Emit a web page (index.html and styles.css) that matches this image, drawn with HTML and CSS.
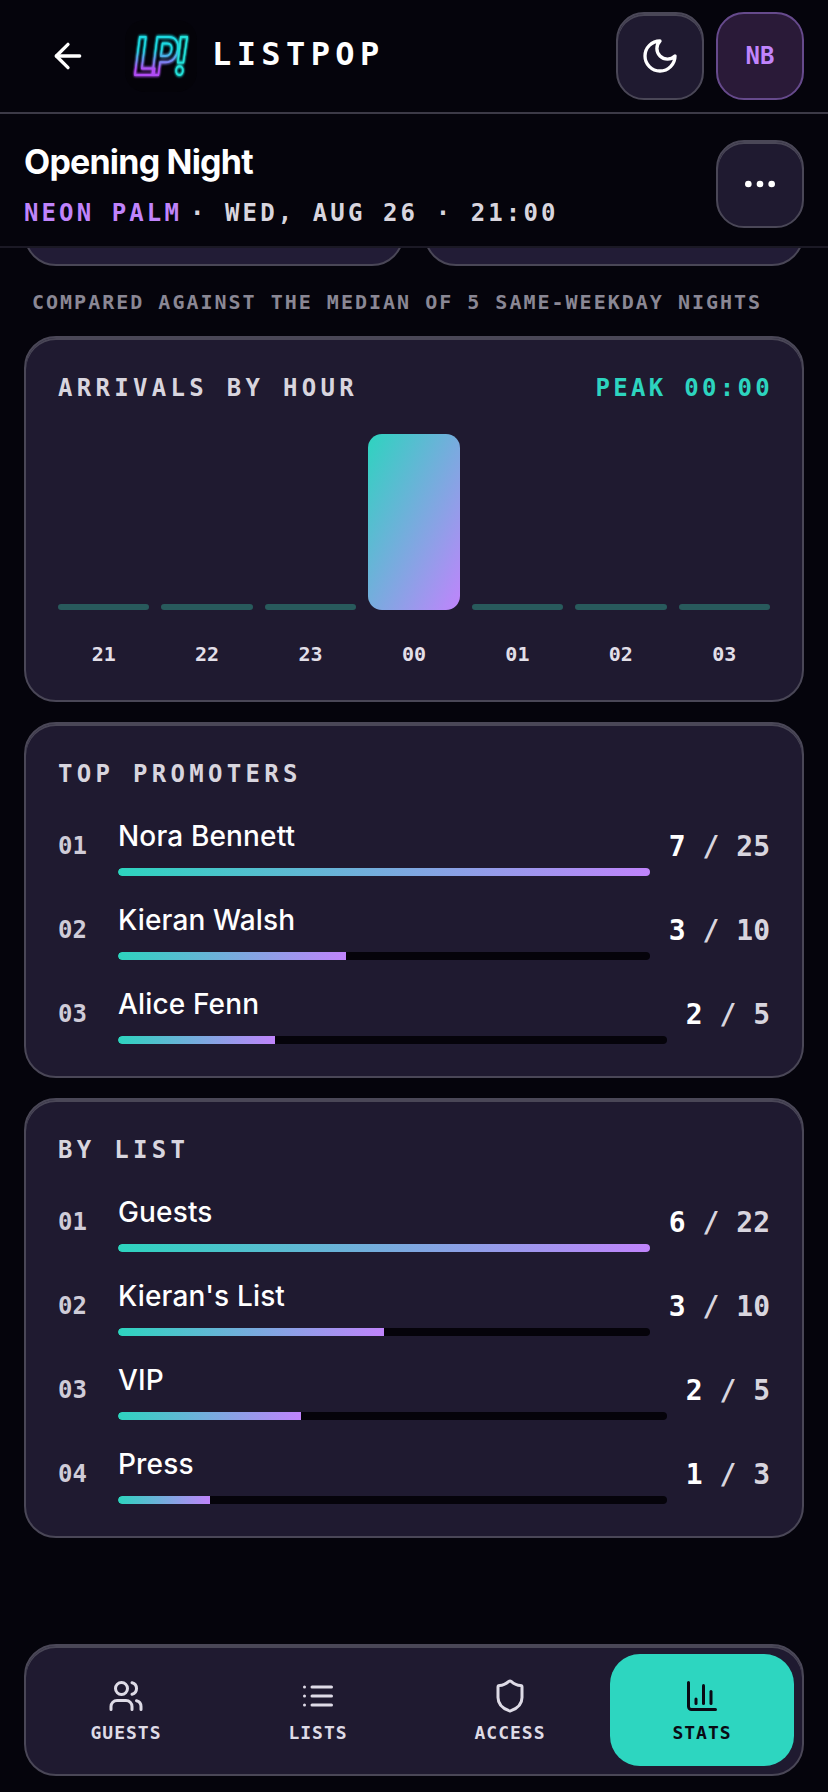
FILE: index.html
```html
<!DOCTYPE html>
<html lang="en">
<head>
    <meta charset="UTF-8">
    <meta name="viewport" content="width=device-width, initial-scale=1.0">
    <title>Listpop - Stats</title>
    <link rel="stylesheet" href="styles.css">
</head>
<body>
    <header class="topbar">
        <button class="back-btn" aria-label="Back">
            <svg class="icon" viewBox="0 0 24 24"><path d="m12 19-7-7 7-7"/><path d="M19 12H5"/></svg>
        </button>
        <div class="logo">
            <svg viewBox="0 0 72 72" width="72" height="72">
                <defs>
                    <linearGradient id="neon" x1="0" y1="0" x2="0" y2="1">
                        <stop offset="0.42" stop-color="#1fd8e0"/>
                        <stop offset="0.72" stop-color="#b04cf5"/>
                    </linearGradient>
                    <filter id="glow" x="-30%" y="-30%" width="160%" height="160%">
                        <feGaussianBlur stdDeviation="1.5" result="b"/>
                        <feMerge><feMergeNode in="b"/><feMergeNode in="b"/><feMergeNode in="SourceGraphic"/></feMerge>
                    </filter>
                </defs>
                <text class="logo-text" transform="scale(0.82 1.05)" x="11" y="52" fill="none" stroke="url(#neon)" filter="url(#glow)">LP<tspan stroke="#22e0d8" dx="2">!</tspan></text>
            </svg>
        </div>
        <div class="brand">LISTPOP</div>
        <button class="square-btn">
            <svg class="icon" viewBox="0 0 24 24"><path d="M12 3a6 6 0 0 0 9 9 9 9 0 1 1-9-9Z"/></svg>
        </button>
        <button class="square-btn avatar">NB</button>
    </header>

    <section class="event-bar">
        <div class="event-info">
            <h1>Opening Night</h1>
            <p class="event-meta"><span class="venue">NEON PALM</span><span class="event-when">· WED, AUG 26 · 21:00</span></p>
        </div>
        <button class="square-btn">
            <svg class="icon" viewBox="0 0 24 24"><circle cx="12" cy="12" r="1"/><circle cx="19" cy="12" r="1"/><circle cx="5" cy="12" r="1"/></svg>
        </button>
    </section>

    <main class="content">
        <div class="stat-row">
            <div class="stat-card"></div>
            <div class="stat-card"></div>
        </div>
        <p class="note">COMPARED AGAINST THE MEDIAN OF 5 SAME-WEEKDAY NIGHTS</p>

        <section class="card">
            <div class="card-head">
                <h2>ARRIVALS BY HOUR</h2>
                <span class="peak">PEAK 00:00</span>
            </div>
            <div class="chart">
                <div class="hour"><div class="hour-slot"><div class="hour-bar"></div></div><span>21</span></div>
                <div class="hour"><div class="hour-slot"><div class="hour-bar"></div></div><span>22</span></div>
                <div class="hour"><div class="hour-slot"><div class="hour-bar"></div></div><span>23</span></div>
                <div class="hour"><div class="hour-slot"><div class="hour-bar peak-bar"></div></div><span>00</span></div>
                <div class="hour"><div class="hour-slot"><div class="hour-bar"></div></div><span>01</span></div>
                <div class="hour"><div class="hour-slot"><div class="hour-bar"></div></div><span>02</span></div>
                <div class="hour"><div class="hour-slot"><div class="hour-bar"></div></div><span>03</span></div>
            </div>
        </section>

        <section class="card">
            <h2>TOP PROMOTERS</h2>
            <div class="rank-list">
                <div class="rank-row">
                    <span class="rank-num">01</span>
                    <div class="rank-main"><div class="rank-name">Nora Bennett</div><div class="track"><div class="fill" style="width:100%"></div></div></div>
                    <span class="rank-count"><b>7</b> / 25</span>
                </div>
                <div class="rank-row">
                    <span class="rank-num">02</span>
                    <div class="rank-main"><div class="rank-name">Kieran Walsh</div><div class="track"><div class="fill" style="width:42.9%"></div></div></div>
                    <span class="rank-count"><b>3</b> / 10</span>
                </div>
                <div class="rank-row">
                    <span class="rank-num">03</span>
                    <div class="rank-main"><div class="rank-name">Alice Fenn</div><div class="track"><div class="fill" style="width:28.6%"></div></div></div>
                    <span class="rank-count"><b>2</b> / 5</span>
                </div>
            </div>
        </section>

        <section class="card">
            <h2>BY LIST</h2>
            <div class="rank-list">
                <div class="rank-row">
                    <span class="rank-num">01</span>
                    <div class="rank-main"><div class="rank-name">Guests</div><div class="track"><div class="fill" style="width:100%"></div></div></div>
                    <span class="rank-count"><b>6</b> / 22</span>
                </div>
                <div class="rank-row">
                    <span class="rank-num">02</span>
                    <div class="rank-main"><div class="rank-name">Kieran's List</div><div class="track"><div class="fill" style="width:50%"></div></div></div>
                    <span class="rank-count"><b>3</b> / 10</span>
                </div>
                <div class="rank-row">
                    <span class="rank-num">03</span>
                    <div class="rank-main"><div class="rank-name">VIP</div><div class="track"><div class="fill" style="width:33.3%"></div></div></div>
                    <span class="rank-count"><b>2</b> / 5</span>
                </div>
                <div class="rank-row">
                    <span class="rank-num">04</span>
                    <div class="rank-main"><div class="rank-name">Press</div><div class="track"><div class="fill" style="width:16.7%"></div></div></div>
                    <span class="rank-count"><b>1</b> / 3</span>
                </div>
            </div>
        </section>
    </main>

    <footer class="footer">
        <nav class="tabs">
            <a class="tab">
                <svg class="icon" viewBox="0 0 24 24"><path d="M16 21v-2a4 4 0 0 0-4-4H6a4 4 0 0 0-4 4v2"/><circle cx="9" cy="7" r="4"/><path d="M22 21v-2a4 4 0 0 0-3-3.87"/><path d="M16 3.13a4 4 0 0 1 0 7.75"/></svg>
                <span>GUESTS</span>
            </a>
            <a class="tab">
                <svg class="icon" viewBox="0 0 24 24"><path d="M3 12h.01"/><path d="M3 18h.01"/><path d="M3 6h.01"/><path d="M8 12h13"/><path d="M8 18h13"/><path d="M8 6h13"/></svg>
                <span>LISTS</span>
            </a>
            <a class="tab">
                <svg class="icon" viewBox="0 0 24 24"><path d="M20 13c0 5-3.5 7.5-7.66 8.95a1 1 0 0 1-.67-.01C7.5 20.5 4 18 4 13V6a1 1 0 0 1 1-1c2 0 4.5-1.2 6.24-2.72a1.17 1.17 0 0 1 1.52 0C14.51 3.81 17 5 19 5a1 1 0 0 1 1 1z"/></svg>
                <span>ACCESS</span>
            </a>
            <a class="tab active">
                <svg class="icon" viewBox="0 0 24 24"><path d="M3 3v16a2 2 0 0 0 2 2h16"/><path d="M18 17V9"/><path d="M13 17V5"/><path d="M8 17v-3"/></svg>
                <span>STATS</span>
            </a>
        </nav>
    </footer>
</body>
</html>
```

FILE: styles.css
```css
* {
    box-sizing: border-box;
}
body {
    margin: 0;
    height: 1792px;
    display: flex;
    flex-direction: column;
    overflow: hidden;
    background-color: #05040c;
    color: #fff;
    font-family: Inter, "Noto Sans", sans-serif;
}
button {
    padding: 0;
    font: inherit;
    color: inherit;
}
h1, h2, p {
    margin: 0;
}
.icon {
    width: 40px;
    height: 40px;
    fill: none;
    stroke: currentColor;
    stroke-width: 2;
    stroke-linecap: round;
    stroke-linejoin: round;
}

/* top bar */
.topbar {
    display: flex;
    align-items: center;
    flex: none;
    height: 114px;
    padding: 0 24px 0 24px;
    border-bottom: 2px solid #3c3a47;
}
.back-btn {
    width: 88px;
    height: 88px;
    display: flex;
    align-items: center;
    justify-content: center;
    background: none;
    border: none;
}
.logo {
    width: 72px;
    height: 72px;
    margin-left: 13px;
    background-color: #040309;
    border-radius: 20px;
}
.logo-text {
    font-family: Inter, sans-serif;
    font-size: 50px;
    font-weight: 700;
    font-style: italic;
    letter-spacing: -7px;
    stroke-width: 1.8px;
    stroke-linejoin: round;
}
.brand {
    flex: 1;
    margin-left: 15px;
    margin-bottom: 4px;
    font-family: "DejaVu Sans Mono", monospace;
    font-size: 32px;
    font-weight: 700;
    letter-spacing: 5.4px;
}
.square-btn {
    width: 88px;
    height: 88px;
    flex: none;
    margin-left: 12px;
    display: flex;
    align-items: center;
    justify-content: center;
    background-color: #1f1a30;
    border: 2px solid #4a4757;
    border-radius: 28px;
    box-shadow: inset 0 2px 0 #4a4757;
}
.avatar {
    background-color: #2a1a38;
    border-color: #664a8c;
    box-shadow: none;
    color: #c084fc;
    font-family: "DejaVu Sans Mono", monospace;
    font-size: 24px;
    font-weight: 700;
}

/* event title */
.event-bar {
    display: flex;
    align-items: flex-start;
    justify-content: space-between;
    flex: none;
    height: 134px;
    padding: 26px 24px 0;
    border-bottom: 2px solid #1b1925;
}
.event-bar h1 {
    font-size: 34px;
    line-height: 44px;
    font-weight: 700;
    letter-spacing: -0.8px;
}
.event-meta {
    margin-top: 13px;
    font-family: "DejaVu Sans Mono", monospace;
    font-size: 24px;
    line-height: 32px;
    font-weight: 700;
    letter-spacing: 3.1px;
    white-space: nowrap;
}
.venue {
    color: #c084fc;
}
.event-when {
    margin-left: 8px;
    color: #d8d5de;
}

/* scrolled content */
.content {
    flex: 1;
    min-height: 0;
    overflow: hidden;
    padding: 0 24px;
}
.stat-row {
    display: flex;
    gap: 20px;
    height: 100px;
    margin-top: -82px;
}
.stat-card {
    flex: 1;
    background-color: #221c36;
    border: 2px solid #4a4757;
    border-radius: 32px;
}
.note {
    margin: 22px 0 20px;
    padding-left: 8px;
    font-family: "DejaVu Sans Mono", monospace;
    font-size: 20px;
    line-height: 28px;
    font-weight: 700;
    letter-spacing: 2px;
    color: #8a8794;
    white-space: nowrap;
}
.card {
    margin-bottom: 20px;
    padding: 32px;
    background-color: #1f1a30;
    border: 2px solid #4a4757;
    border-radius: 32px;
    box-shadow: inset 0 2px 0 #4a4757;
}
.card h2 {
    margin: 2px 0 -2px;
    font-family: "DejaVu Sans Mono", monospace;
    font-size: 24px;
    line-height: 32px;
    font-weight: 700;
    letter-spacing: 4.3px;
    color: #d8d5de;
}
.card-head {
    display: flex;
    justify-content: space-between;
}
.peak {
    margin: 2px -3px -2px 0;
    font-family: "DejaVu Sans Mono", monospace;
    font-size: 24px;
    line-height: 32px;
    font-weight: 700;
    letter-spacing: 3.3px;
    color: #2dd4bf;
}

/* arrivals chart */
.chart {
    display: flex;
    gap: 12px;
    margin-top: 32px;
}
.hour {
    flex: 1;
    text-align: center;
    font-family: "DejaVu Sans Mono", monospace;
    font-size: 20px;
    line-height: 28px;
    font-weight: 700;
    color: #e2dfe8;
}
.hour-slot {
    height: 176px;
    margin-bottom: 30px;
    display: flex;
    align-items: flex-end;
}
.hour-bar {
    width: 100%;
    height: 6px;
    background-color: #285a5c;
    border-radius: 4px;
}
.peak-bar {
    height: 176px;
    background: linear-gradient(to bottom right, #2dd4bf, #c084fc);
    border-radius: 14px;
}

/* ranked lists */
.rank-list {
    display: flex;
    flex-direction: column;
    gap: 24px;
    margin-top: 28px;
}
.rank-row {
    display: flex;
    align-items: center;
    height: 60px;
}
.rank-num {
    width: 60px;
    flex: none;
    font-family: "DejaVu Sans Mono", monospace;
    font-size: 24px;
    font-weight: 700;
    color: #cfccd8;
}
.rank-main {
    flex: 1;
    min-width: 0;
}
.rank-name {
    font-size: 28px;
    line-height: 40px;
    font-weight: 500;
    letter-spacing: 0.15px;
    margin-bottom: 12px;
}
.track {
    height: 8px;
    background-color: #05030a;
    border-radius: 4px;
    overflow: hidden;
}
.fill {
    height: 100%;
    background: linear-gradient(90deg, #2dd4bf, #c084fc);
    border-radius: 4px 0 0 4px;
}
.rank-count {
    flex: none;
    margin-left: 19px;
    font-family: "DejaVu Sans Mono", monospace;
    font-size: 28px;
    font-weight: 700;
    color: #d8d5de;
}
.rank-count b {
    color: #fff;
}

/* bottom nav */
.footer {
    flex: none;
    padding: 0 24px 16px;
}
.tabs {
    display: grid;
    grid-template-columns: repeat(4, 1fr);
    gap: 8px;
    padding: 8px;
    background-color: #1f1a30;
    border: 2px solid #4a4757;
    border-radius: 32px;
    box-shadow: inset 0 2px 0 #4a4757;
}
.tab {
    height: 112px;
    display: flex;
    flex-direction: column;
    align-items: center;
    justify-content: center;
    gap: 7px;
    padding-top: 3px;
    border-radius: 30px;
    color: #dedbe6;
    font-family: "DejaVu Sans Mono", monospace;
    font-size: 18px;
    line-height: 24px;
    font-weight: 700;
    letter-spacing: 1px;
}
.tab .icon {
    width: 36px;
    height: 36px;
}
.tab.active {
    background-color: #2dd6c0;
    color: #0a0a14;
}
```
